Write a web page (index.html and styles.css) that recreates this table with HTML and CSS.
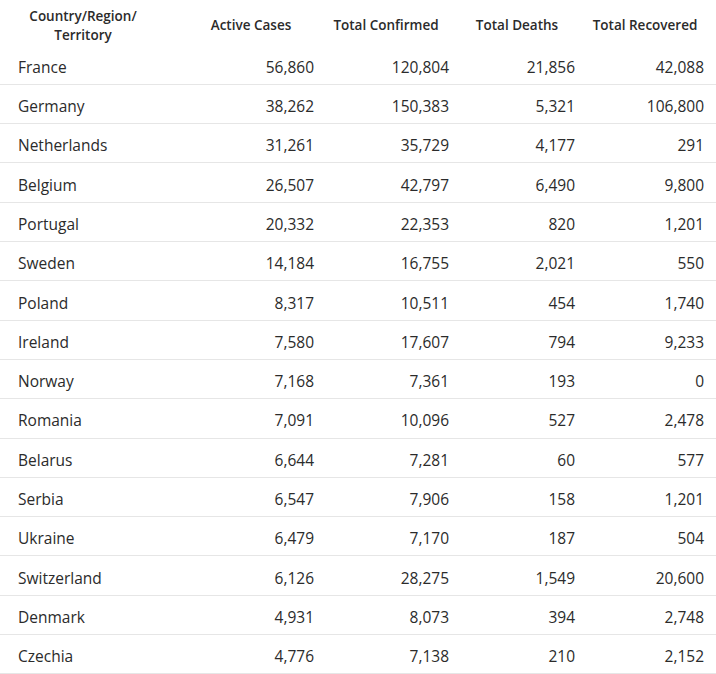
FILE: index.html
```html
<!DOCTYPE html>
<html>
<head>
<meta charset="utf-8">
<link rel="stylesheet" href="styles.css">
</head>
<body>
<table class="cases">
  <colgroup>
    <col class="c-name"><col class="c-active"><col class="c-conf"><col class="c-death"><col class="c-rec">
  </colgroup>
  <thead>
    <tr>
      <th class="h-name">Country/Region/<br>Territory</th>
      <th>Active Cases</th>
      <th>Total Confirmed</th>
      <th>Total Deaths</th>
      <th class="h-rec">Total Recovered</th>
    </tr>
  </thead>
  <tbody>
    <tr><td>France</td><td>56,860</td><td>120,804</td><td>21,856</td><td>42,088</td></tr>
    <tr><td>Germany</td><td>38,262</td><td>150,383</td><td>5,321</td><td>106,800</td></tr>
    <tr><td>Netherlands</td><td>31,261</td><td>35,729</td><td>4,177</td><td>291</td></tr>
    <tr><td>Belgium</td><td>26,507</td><td>42,797</td><td>6,490</td><td>9,800</td></tr>
    <tr><td>Portugal</td><td>20,332</td><td>22,353</td><td>820</td><td>1,201</td></tr>
    <tr><td>Sweden</td><td>14,184</td><td>16,755</td><td>2,021</td><td>550</td></tr>
    <tr><td>Poland</td><td>8,317</td><td>10,511</td><td>454</td><td>1,740</td></tr>
    <tr><td>Ireland</td><td>7,580</td><td>17,607</td><td>794</td><td>9,233</td></tr>
    <tr><td>Norway</td><td>7,168</td><td>7,361</td><td>193</td><td>0</td></tr>
    <tr><td>Romania</td><td>7,091</td><td>10,096</td><td>527</td><td>2,478</td></tr>
    <tr><td>Belarus</td><td>6,644</td><td>7,281</td><td>60</td><td>577</td></tr>
    <tr><td>Serbia</td><td>6,547</td><td>7,906</td><td>158</td><td>1,201</td></tr>
    <tr><td>Ukraine</td><td>6,479</td><td>7,170</td><td>187</td><td>504</td></tr>
    <tr><td>Switzerland</td><td>6,126</td><td>28,275</td><td>1,549</td><td>20,600</td></tr>
    <tr><td>Denmark</td><td>4,931</td><td>8,073</td><td>394</td><td>2,748</td></tr>
    <tr><td>Czechia</td><td>4,776</td><td>7,138</td><td>210</td><td>2,152</td></tr>
  </tbody>
</table>
</body>
</html>
```
FILE: styles.css
```css
html, body {
  margin: 0;
  padding: 0;
  background: #ffffff;
}
body {
  font-family: "Open Sans", "Noto Sans", "Liberation Sans", sans-serif;
  color: #2b2b2b;
}
.cases {
  width: 716px;
  border-collapse: collapse;
  table-layout: fixed;
}
.c-name { width: 184px; }
.c-active { width: 134px; }
.c-conf { width: 136px; }
.c-death { width: 126px; }
.c-rec { width: 136px; }

.cases th {
  font-size: 13.5px;
  font-weight: 600;
  line-height: 19px;
  text-align: center;
  vertical-align: middle;
  height: 39.6px;
  padding: 6px 0 0 0;
}
.cases th.h-name {
  padding-right: 18px;
}
.cases th.h-rec {
  padding-right: 6px;
}
.cases td {
  font-size: 15.5px;
  height: 34.3px;
  line-height: 20px;
  padding: 4px 5px 0 0;
  text-align: right;
  border-bottom: 1px solid #e6e6e6;
  vertical-align: middle;
}
.cases td:first-child {
  text-align: left;
  padding-left: 18px;
}
.cases td:nth-child(2) { padding-right: 4px; }
.cases td:last-child { padding-right: 12px; }
```
